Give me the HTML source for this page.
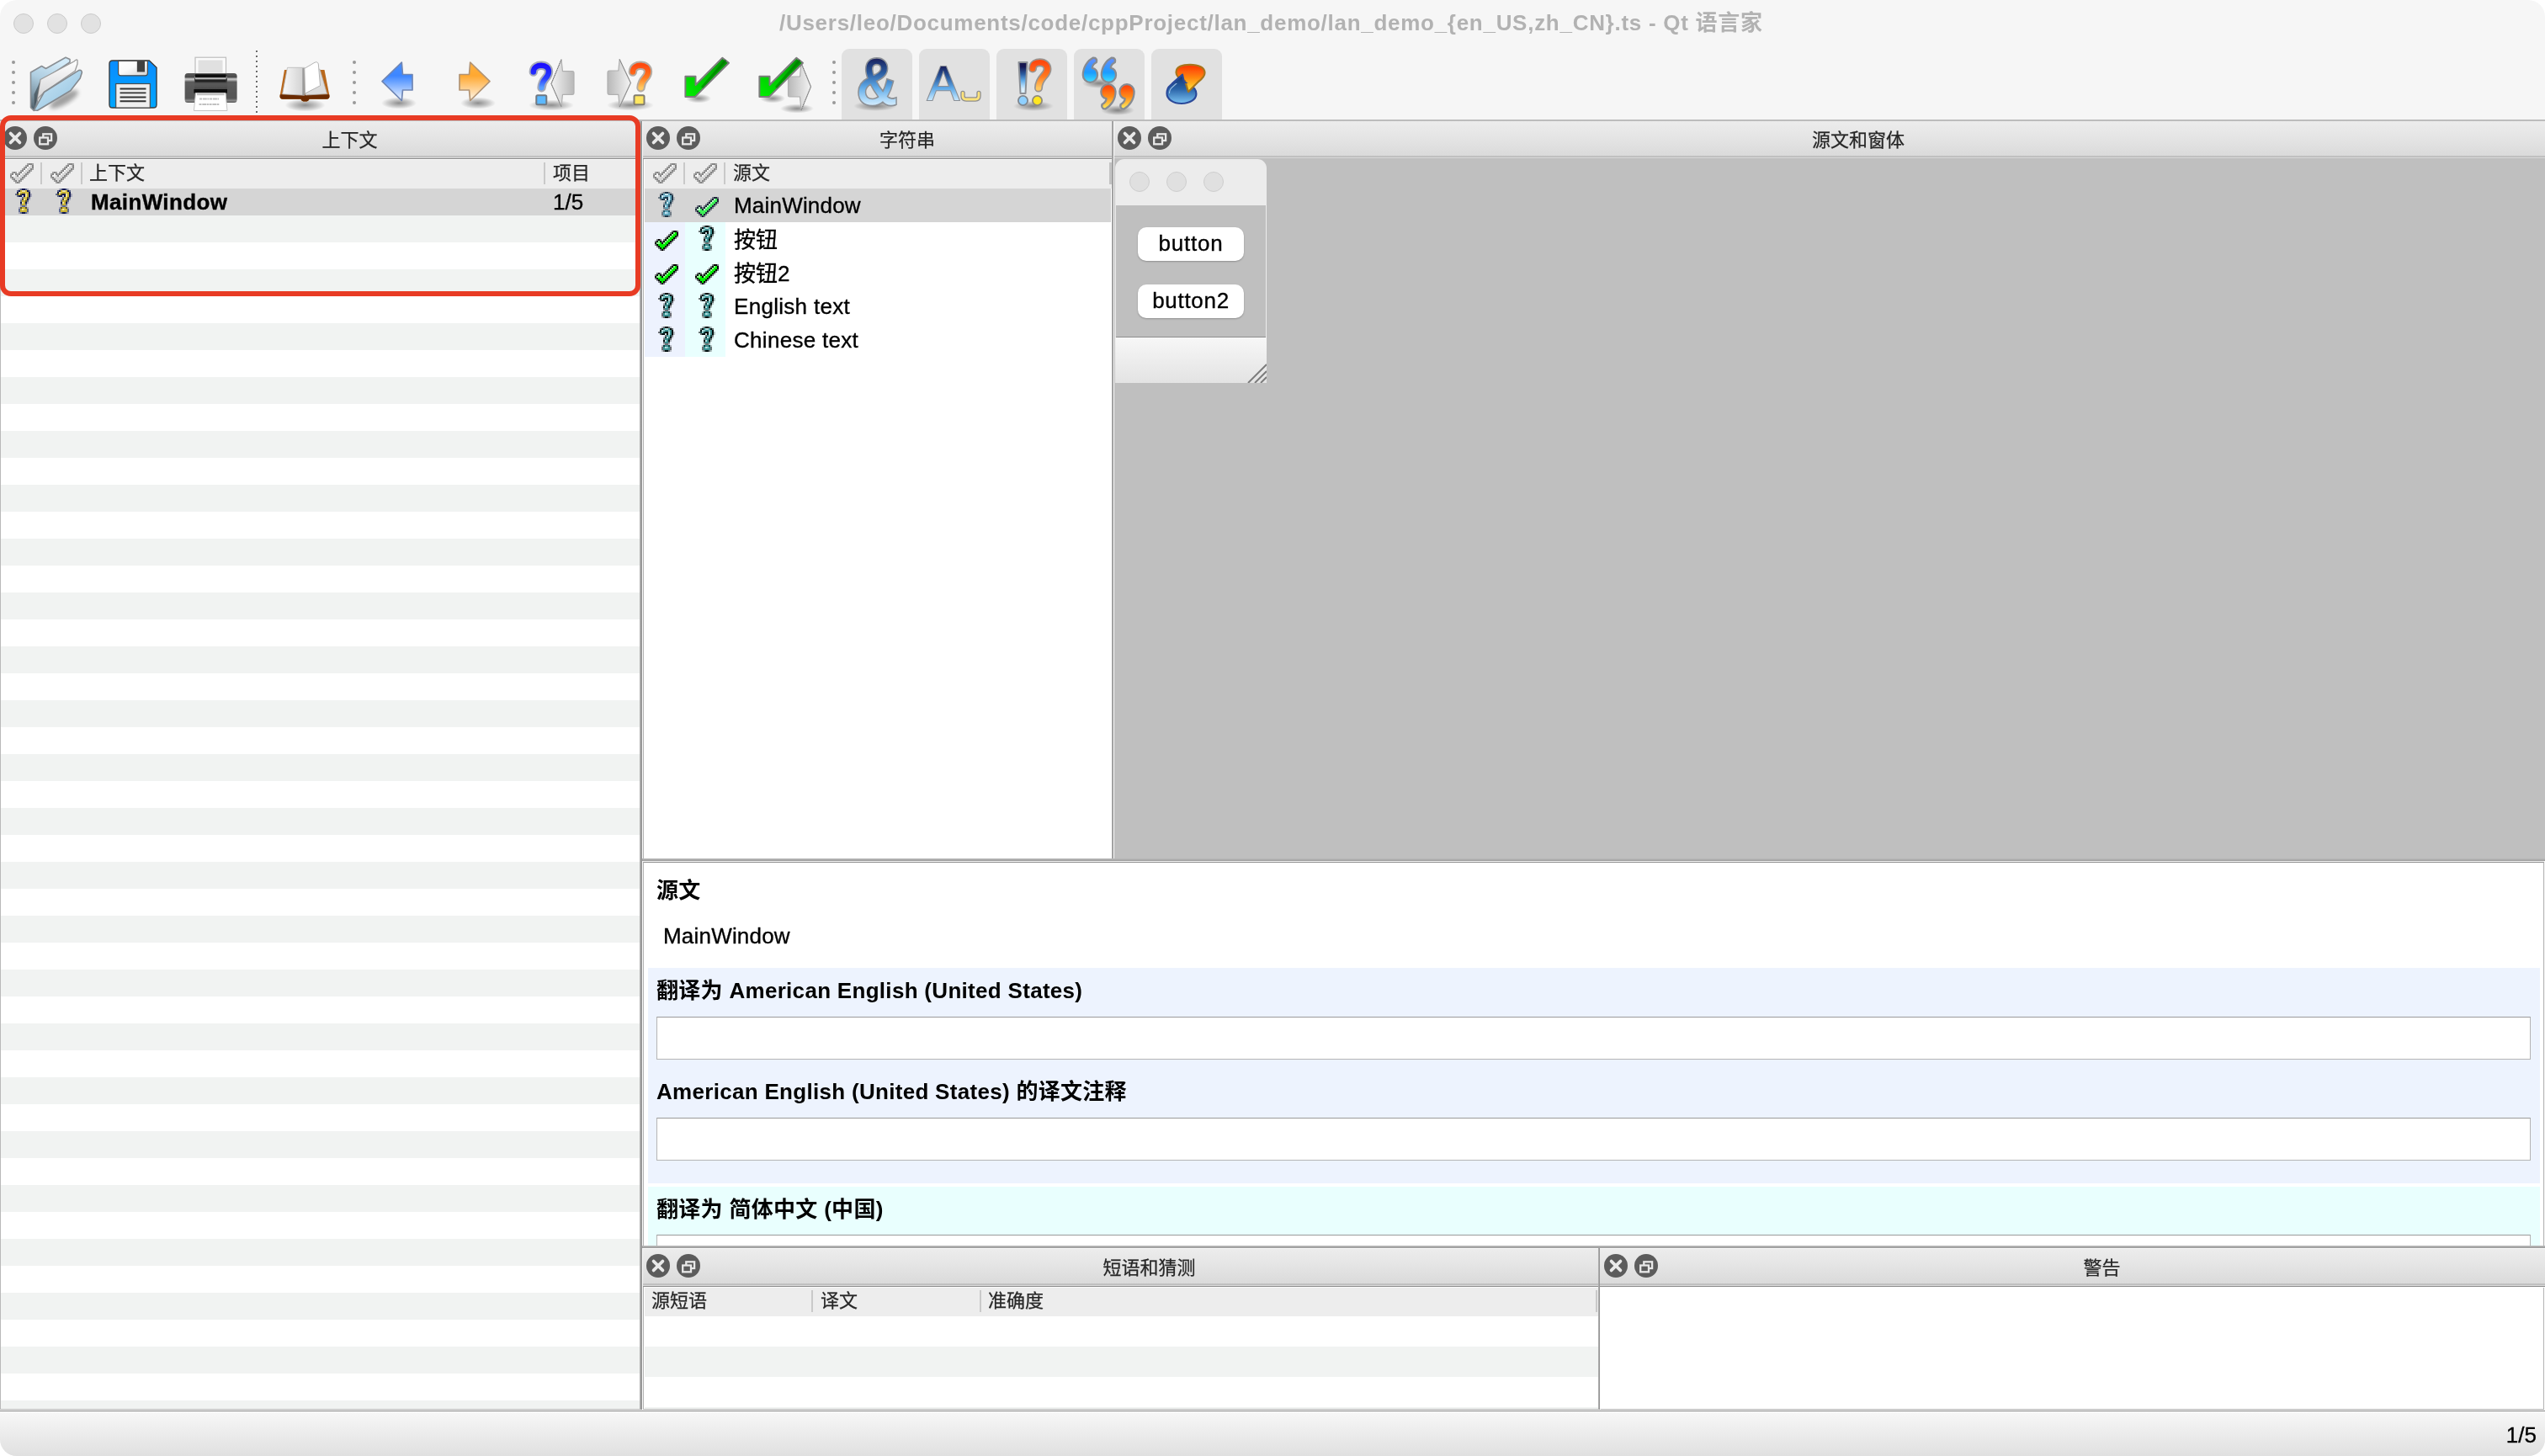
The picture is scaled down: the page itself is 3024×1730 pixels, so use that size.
<!DOCTYPE html>
<html lang="zh-CN">
<head>
<meta charset="utf-8">
<title>Qt 语言家</title>
<style>
html,body{margin:0;padding:0;}
body{width:3024px;height:1730px;overflow:hidden;background:#fff;position:relative;
  font-family:"Liberation Sans","Noto Sans CJK SC",sans-serif;color:#000;}
.abs,.win *{position:absolute;box-sizing:border-box;}
.win{position:absolute;left:0;top:0;width:3024px;height:1730px;background:#f6f6f6;border-radius:20px;overflow:hidden;will-change:transform;}
.tl{width:24px;height:24px;border-radius:50%;background:#e2e2e2;border:1.5px solid #cacaca;top:16px;}
.title{left:0;top:0;width:3024px;height:56px;}
.title span{left:926px;top:12px;font-size:26px;line-height:30px;font-weight:bold;color:#b2b2b2;white-space:nowrap;letter-spacing:0.72px;}
/* toolbar */
.hdl i{width:4px;height:4px;border-radius:50%;background:#999;left:0;}
.tsep{left:304px;top:60px;width:2px;height:74px;background:repeating-linear-gradient(#6a6a6a 0,#6a6a6a 2px,transparent 2px,transparent 6px);}
.tsep2{left:305px;top:61px;width:2px;height:74px;background:repeating-linear-gradient(#fdfdfd 0,#fdfdfd 2px,transparent 2px,transparent 6px);}
.tog{top:58px;width:84px;height:86px;background:#e1e1e1;border-radius:9px 9px 0 0;}
.tbline{left:0;top:142px;width:3024px;height:2px;background:#bcbcbc;}
/* dock title bars */
.dt{height:41px;top:144px;background:linear-gradient(#ececec,#e6e6e6 40%,#dadada);}
.dt .ttl{left:0;right:0;top:0;height:41px;line-height:46px;text-align:center;font-size:22px;color:#262626;-webkit-text-stroke:0.25px #262626;}
.dtl{height:5px;background:linear-gradient(#c0c0c0 0,#c0c0c0 2px,#dadada 2px,#dadada 3px,#8c8c8c 3px,#8c8c8c 4px,#fafafa 4px,#fafafa 5px);}
.dtl2{display:none;}
.cb{width:28px;height:28px;top:6px;}
/* header rows */
.hd{background:#ededed;height:34px;font-size:22px;color:#262626;}
.hd span{top:0;line-height:32px;white-space:nowrap;-webkit-text-stroke:0.25px #262626;}
.hd b{top:3px;width:2px;height:26px;background:#c9c9c9;}
.vsep{width:3px;background:linear-gradient(90deg,#b4b4b4,#8e8e8e);}
.hsep{height:3px;background:linear-gradient(#bdbdbd,#999);}
.row{font-size:26px;white-space:nowrap;-webkit-text-stroke:0.35px #000;}
.btn{-webkit-text-stroke:0.35px #000;}
.ed b.h{font-size:26px;font-weight:bold;white-space:nowrap;left:15px;line-height:32px;letter-spacing:0.3px;}
.inp{background:#fff;border:1.5px solid #b5b5b5;border-top-color:#9a9a9a;}
</style>
</head>
<body>
<div class="win">
  <!-- title bar -->
  <div class="tl" style="left:16px"></div><div class="tl" style="left:56px"></div><div class="tl" style="left:96px"></div>
  <div class="title"><span>/Users/leo/Documents/code/cppProject/lan_demo/lan_demo_{en_US,zh_CN}.ts - Qt 语言家</span></div>

  <!-- toolbar -->
  <div class="hdl" style="left:14px;top:72px;width:5px;height:54px"><i style="top:0"></i><i style="top:12px"></i><i style="top:24px"></i><i style="top:36px"></i><i style="top:48px"></i></div>
  <div class="tsep2"></div><div class="tsep"></div>
  <div class="hdl" style="left:419px;top:72px;width:5px;height:54px"><i style="top:0"></i><i style="top:12px"></i><i style="top:24px"></i><i style="top:36px"></i><i style="top:48px"></i></div>
  <div class="hdl" style="left:989px;top:72px;width:5px;height:54px"><i style="top:0"></i><i style="top:12px"></i><i style="top:24px"></i><i style="top:36px"></i><i style="top:48px"></i></div>
  <div class="tog" style="left:1000px"></div>
  <div class="tog" style="left:1092px"></div>
  <div class="tog" style="left:1184px"></div>
  <div class="tog" style="left:1276px"></div>
  <div class="tog" style="left:1368px"></div>
  <!--TB-START-->
  <svg width="0" height="0" style="left:0;top:0">
    <defs>
      <linearGradient id="gFlap" x1="0" y1="0" x2="1" y2="1"><stop offset="0" stop-color="#cfe9f8"/><stop offset="1" stop-color="#8fc0de"/></linearGradient>
      <linearGradient id="gBack" x1="0.4" y1="0" x2="0.1" y2="1"><stop offset="0" stop-color="#d2eaf8"/><stop offset="0.4" stop-color="#aecde0"/><stop offset="0.72" stop-color="#8199a8"/><stop offset="1" stop-color="#4e5c66"/></linearGradient>
      <linearGradient id="gPaper" x1="0" y1="0" x2="0" y2="1"><stop offset="0" stop-color="#ffffff"/><stop offset="1" stop-color="#d4d4d6"/></linearGradient>
      <linearGradient id="gSave" x1="0" y1="0" x2="0" y2="1"><stop offset="0" stop-color="#0a8cff"/><stop offset="1" stop-color="#00a6ff"/></linearGradient>
      <linearGradient id="gLbl" x1="0" y1="0" x2="1" y2="1"><stop offset="0" stop-color="#ffffff"/><stop offset="0.45" stop-color="#fafafa"/><stop offset="1" stop-color="#cfcfcf"/></linearGradient>
      <linearGradient id="gPrB" x1="0" y1="0" x2="0" y2="1"><stop offset="0" stop-color="#6a6a6a"/><stop offset="0.12" stop-color="#3c3c3c"/><stop offset="0.2" stop-color="#8d8d8d"/><stop offset="0.3" stop-color="#3a3a3a"/><stop offset="0.55" stop-color="#5a5a5a"/><stop offset="0.8" stop-color="#4a4a4a"/><stop offset="1" stop-color="#6e6e6e"/></linearGradient>
      <linearGradient id="gPrS" x1="0" y1="0" x2="0" y2="1"><stop offset="0" stop-color="#5a5a5a"/><stop offset="0.13" stop-color="#4a4a4a"/><stop offset="0.2" stop-color="#d0d0d0"/><stop offset="0.3" stop-color="#5c5c5c"/><stop offset="0.85" stop-color="#555"/><stop offset="0.93" stop-color="#8a8a8a"/><stop offset="1" stop-color="#555"/></linearGradient>
      <linearGradient id="gBook" x1="0" y1="0" x2="1" y2="0"><stop offset="0" stop-color="#fafafa"/><stop offset="1" stop-color="#cfcfcf"/></linearGradient>
      <linearGradient id="gBlueA" x1="0" y1="0" x2="0" y2="1"><stop offset="0" stop-color="#4a90ff"/><stop offset="0.35" stop-color="#3c86ff"/><stop offset="1" stop-color="#f4f8ff"/></linearGradient>
      <linearGradient id="gOrgA" x1="0" y1="0" x2="0" y2="1"><stop offset="0" stop-color="#ffb040"/><stop offset="0.35" stop-color="#ffa830"/><stop offset="1" stop-color="#fff6ea"/></linearGradient>
      <linearGradient id="gGryA" x1="0" y1="0" x2="1" y2="0"><stop offset="0" stop-color="#f4f4f4"/><stop offset="1" stop-color="#b8b8b8"/></linearGradient>
      <linearGradient id="gGryB" x1="1" y1="0" x2="0" y2="0"><stop offset="0" stop-color="#f4f4f4"/><stop offset="1" stop-color="#b8b8b8"/></linearGradient>
      <linearGradient id="gQBlue" x1="0" y1="0" x2="0" y2="1"><stop offset="0" stop-color="#1a10ff"/><stop offset="0.6" stop-color="#2a40ff"/><stop offset="1" stop-color="#5aa0ff"/></linearGradient>
      <linearGradient id="gQOrg" x1="0" y1="0" x2="0" y2="1"><stop offset="0" stop-color="#ff4a10"/><stop offset="0.55" stop-color="#ff7a20"/><stop offset="1" stop-color="#ffc860"/></linearGradient>
      <linearGradient id="gChk" x1="1" y1="0" x2="0" y2="1"><stop offset="0" stop-color="#008c00"/><stop offset="0.5" stop-color="#00c400"/><stop offset="1" stop-color="#00f000"/></linearGradient>
      <linearGradient id="gNavy" x1="0" y1="0" x2="0" y2="1"><stop offset="0.14" stop-color="#161650"/><stop offset="0.38" stop-color="#2c5ca0"/><stop offset="0.58" stop-color="#5ea8e6"/><stop offset="0.74" stop-color="#a8d6f8"/><stop offset="0.86" stop-color="#dcf0fe"/></linearGradient>
      <linearGradient id="gQ6" x1="0" y1="0" x2="0" y2="1"><stop offset="0" stop-color="#6a8cff"/><stop offset="0.6" stop-color="#1a9cff"/><stop offset="1" stop-color="#40e0ff"/></linearGradient>
      <linearGradient id="gQ9" x1="0" y1="0" x2="0" y2="1"><stop offset="0" stop-color="#ff3a08"/><stop offset="0.5" stop-color="#ff8a18"/><stop offset="1" stop-color="#fff060"/></linearGradient>
      <linearGradient id="gBubO" x1="0" y1="0" x2="0" y2="1"><stop offset="0" stop-color="#ff3000"/><stop offset="0.5" stop-color="#ff8a10"/><stop offset="1" stop-color="#ffec40"/></linearGradient>
      <linearGradient id="gBubB" x1="0" y1="0" x2="0" y2="1"><stop offset="0" stop-color="#14306c"/><stop offset="0.5" stop-color="#2a64a8"/><stop offset="1" stop-color="#7cc4f4"/></linearGradient>
      <linearGradient id="gQ9r" x1="0" y1="0" x2="0" y2="1"><stop offset="0" stop-color="#fff060"/><stop offset="0.5" stop-color="#ff8a18"/><stop offset="1" stop-color="#ff3a08"/></linearGradient>
      <radialGradient id="gShd"><stop offset="0" stop-color="#000" stop-opacity="0.42"/><stop offset="0.6" stop-color="#000" stop-opacity="0.18"/><stop offset="1" stop-color="#000" stop-opacity="0"/></radialGradient>
      <filter id="fPx" x="-10%" y="-10%" width="120%" height="120%"><feGaussianBlur stdDeviation="0.2"/></filter>
      <filter id="fB1" x="-20%" y="-20%" width="140%" height="140%"><feGaussianBlur stdDeviation="0.7"/></filter>
      <filter id="fB2" x="-30%" y="-30%" width="160%" height="160%"><feGaussianBlur stdDeviation="2.5"/></filter>
    </defs>
  </svg>
  <!-- open folder -->
  <svg style="left:26px;top:60px" width="90" height="80" viewBox="0 0 90 80">
    <ellipse cx="50" cy="58" rx="19" ry="6" transform="rotate(-30 50 58)" fill="#000" opacity="0.35" filter="url(#fB2)"/>
    <g filter="url(#fB1)">
    <path d="M10.5 26 L23.5 18.5 L28.5 21.5 L52 8.2 L57 10.5 L57 14 L22 37 L17 68 L14.3 71.5 L10.5 67.6 Z" fill="url(#gBack)" stroke="#8a8f94" stroke-width="1.6" stroke-linejoin="round"/>
    <path d="M22 34.5 L62 13 Q65 10 66 11.5 L66 16 L63.2 24.2 L27 49 L18 58 Z" fill="url(#gPaper)" stroke="#9a9a9a" stroke-width="1.3" stroke-linejoin="round"/>
    <path d="M14.5 52 L21.5 37 L17.5 60 L15 66 Z" fill="#2c343a" opacity="0.55"/>
    <path d="M14.3 71 L26.4 49.5 L67.6 23.6 Q71 22.5 71.4 26 L69.2 33 L57.7 47.8 L18.5 71.3 Z" fill="url(#gFlap)" stroke="#858a8f" stroke-width="1.6" stroke-linejoin="round"/>
    </g>
  </svg>
  <!-- save -->
  <svg style="left:129.1px;top:70.8px" width="58" height="58" viewBox="0 0 60 60">
    <path d="M5 1 H50 L59 9.5 V55 Q59 59 55 59 H5 Q1 59 1 55 V5 Q1 1 5 1 Z" fill="url(#gSave)" stroke="#3a3a3a" stroke-width="1.4"/>
    <path d="M12 1.4 H48 V16.5 Q48 19.5 45 19.5 H15 Q12 19.5 12 16.5 Z" fill="url(#gLbl)" stroke="#4a4a4a" stroke-width="1.2"/>
    <rect x="35" y="1.8" width="9.5" height="13.2" fill="#404040"/>
    <rect x="9" y="29.5" width="42" height="29.5" fill="#efefef" stroke="#4a4a4a" stroke-width="1.2"/>
    <path d="M14 35.7 H46 M14 40.7 H46 M14 46 H46 M14 51 H46" stroke="#333" stroke-width="2"/>
  </svg>
  <!-- printer -->
  <svg style="left:210px;top:60px" width="90" height="80" viewBox="0 0 90 80">
    <g filter="url(#fB1)">
    <rect x="22" y="8.2" width="36.5" height="21" fill="#fbfbfb" stroke="#bdbdbd" stroke-width="1.2"/>
    <rect x="25.5" y="11.5" width="29" height="15" fill="#e0e0e0"/>
    <rect x="9.6" y="27" width="62" height="35" rx="3.5" fill="url(#gPrS)"/>
    <rect x="21" y="27" width="39" height="24" fill="url(#gPrB)"/>
    <rect x="22" y="28.3" width="36.5" height="3.6" fill="#0c0c0c"/>
    <rect x="22" y="32.4" width="36.5" height="1.8" fill="#b9b9b9"/>
    <rect x="22" y="35" width="36.5" height="2.6" fill="#202020"/>
    <rect x="20.4" y="46" width="39.6" height="4.6" fill="#0e0e0e"/>
    <path d="M22.5 50.6 H58 L60 71.5 H20.4 Z" fill="#fff" stroke="#c4c4c4" stroke-width="1"/>
    <path d="M24 52 H56.5" stroke="#9a9a9a" stroke-width="2.5" opacity=".6"/>
    <path d="M27 57.5 H50 M26.5 64 H51" stroke="#c0c0c0" stroke-width="2.2" stroke-dasharray="3 0.8 5 0.6 2 0.7"/>
    </g>
  </svg>
  <!-- book -->
  <svg style="left:320px;top:60px" width="90" height="80" viewBox="0 0 90 80">
    <ellipse cx="42.5" cy="65" rx="24" ry="7.5" fill="url(#gShd)"/>
    <g filter="url(#fB1)">
    <path d="M18 23 H65.5 L71.5 54 Q71.8 57.7 68 57.7 H47.5 Q46.5 60.6 42.5 60.6 Q38.5 60.6 37.4 57.7 H16 Q12.2 57.7 12.6 54 Z" fill="#b9681c"/>
    <path d="M12.8 52.3 H71.2 L71.5 54 Q71.8 57.7 68 57.7 H47.5 Q46.5 60.6 42.5 60.6 Q38.5 60.6 37.4 57.7 H16 Q12.2 57.7 12.6 54 Z" fill="#6b2c02"/>
    <path d="M60 22 L68.6 51.6 L43 53 L42 30 Z" fill="#dcdcdc" stroke="#b0b0b0" stroke-width=".7"/>
    <path d="M21.5 20.3 H41.8 V53.2 L15.6 51.8 Z" fill="url(#gBook)" stroke="#b8b8b8" stroke-width="0.8"/>
    <path d="M39.3 21 H41.8 V53 H39.3 Z" fill="#777" opacity="0.6"/>
    <path d="M41.8 21.4 L54 14.2 Q57.5 12.8 58.3 16 L60.5 41.8 L42.6 51 Z" fill="#fff" stroke="#b4b4b4" stroke-width="1"/>
    </g>
  </svg>
  <!-- prev (blue arrow) -->
  <svg style="left:440px;top:60px" width="70" height="80" viewBox="0 0 70 80">
    <ellipse cx="34" cy="62.5" rx="21" ry="7" fill="url(#gShd)"/>
    <path d="M37.3 14 L14 36.7 L37.3 59.5 L38.5 47 H50 V28.5 H38.5 Z" fill="url(#gBlueA)" stroke="#6f86b4" stroke-width="1.7" stroke-linejoin="round" filter="url(#fB1)"/>
  </svg>
  <!-- next (orange arrow) -->
  <svg style="left:532px;top:60px" width="70" height="80" viewBox="0 0 70 80">
    <ellipse cx="36" cy="62.5" rx="21" ry="7" fill="url(#gShd)"/>
    <path d="M26.7 14 L50 36.7 L26.7 59.5 L25.5 47 H14 V28.5 H25.5 Z" fill="url(#gOrgA)" stroke="#b29474" stroke-width="1.7" stroke-linejoin="round" filter="url(#fB1)"/>
  </svg>
  <!-- prev unfinished  ?< -->
  <svg style="left:620px;top:60px" width="76" height="80" viewBox="0 0 76 80">
    <ellipse cx="35" cy="65" rx="27" ry="6.5" fill="url(#gShd)"/>
    <g filter="url(#fB1)">
    <path d="M47 10.8 L35 39.5 L47 66.8 L48.5 52.3 H60 Q62 52.3 62 50 V27 Q62 24.7 60 24.7 H48.5 Z" fill="url(#gGryA)" stroke="#b0b0b0" stroke-width="1.2" stroke-linejoin="round"/>
    <path d="M47 10.8 L35 39.5 L47 66.8" fill="none" stroke="#6e6e6e" stroke-width="1" stroke-dasharray="1.2 1"/>
    <path d="M13.8 25.5 C13.8 19.5 19 17.8 23 17.8 C28.5 17.8 32 20.6 32 25.2 C32 33 24 33 23.5 44.2" fill="none" stroke="#a6aab8" stroke-width="10.4" stroke-linecap="round"/>
    <path d="M13.8 25.5 C13.8 19.5 19 17.8 23 17.8 C28.5 17.8 32 20.6 32 25.2 C32 33 24 33 23.5 44.2" fill="none" stroke="url(#gQBlue)" stroke-width="6.4" stroke-linecap="round"/>
    <rect x="17.3" y="53.3" width="12" height="11" rx="1.5" fill="#5cb8ff" stroke="#6f7882" stroke-width="2"/>
    </g>
  </svg>
  <!-- next unfinished  >? -->
  <svg style="left:712px;top:60px" width="76" height="80" viewBox="0 0 76 80">
    <ellipse cx="37" cy="65" rx="28" ry="6.5" fill="url(#gShd)"/>
    <g filter="url(#fB1)">
    <path d="M24.2 10.6 L37.4 38.5 L24.2 67 L22.8 52.3 H12 Q10 52.3 10 50 V26.3 Q10 24 12 24 H22.8 Z" fill="url(#gGryB)" stroke="#b0b0b0" stroke-width="1.2" stroke-linejoin="round"/>
    <path d="M24.2 10.6 L37.4 38.5 L24.2 67" fill="none" stroke="#6e6e6e" stroke-width="1" stroke-dasharray="1.2 1"/>
    <path d="M39.9 25.5 C39.9 19.5 45 17.8 49 17.8 C54.5 17.8 58 20.6 58 25.2 C58 33 50 33 49.5 44.2" fill="none" stroke="#b4aca4" stroke-width="10.4" stroke-linecap="round"/>
    <path d="M39.9 25.5 C39.9 19.5 45 17.8 49 17.8 C54.5 17.8 58 20.6 58 25.2 C58 33 50 33 49.5 44.2" fill="none" stroke="url(#gQOrg)" stroke-width="6.4" stroke-linecap="round"/>
    <rect x="41.5" y="53.3" width="12" height="11" rx="1.5" fill="#ffe660" stroke="#827d70" stroke-width="2"/>
    </g>
  </svg>
  <!-- done (green check) -->
  <svg style="left:804px;top:60px" width="76" height="80" viewBox="0 0 76 80">
    <ellipse cx="26" cy="57" rx="15" ry="5.5" fill="url(#gShd)"/>
    <g filter="url(#fB1)"><path d="M10.4 30.7 H22.5 V41 L54.4 8.7 L62 14.7 L22 54.9 H10.4 Z" fill="url(#gChk)" stroke="#7c7c7c" stroke-width="2" stroke-linejoin="round"/><path d="M31 43 L57.5 12.5" stroke="#006a00" stroke-width="3.2" opacity=".5" stroke-linecap="round"/></g>
  </svg>
  <!-- done and next -->
  <svg style="left:892px;top:60px" width="80" height="80" viewBox="0 0 80 80">
    <ellipse cx="26" cy="57" rx="15" ry="5.5" fill="url(#gShd)"/>
    <ellipse cx="55" cy="69" rx="20" ry="5.5" fill="url(#gShd)"/>
    <g filter="url(#fB1)">
    <path d="M60 15 L71.5 43 L60 71 L58.5 55 H46 Q44.5 55 44.5 53 V33 Q44.5 31 46 31 H58.5 Z" fill="url(#gGryB)" stroke="#b0b0b0" stroke-width="1.2" stroke-linejoin="round"/>
    <path d="M60 15 L71.5 43 L60 71" fill="none" stroke="#6e6e6e" stroke-width="1" stroke-dasharray="1.2 1"/>
    <path d="M10.4 30.7 H22.5 V41 L54.4 8.7 L62 14.7 L22 54.9 H10.4 Z" fill="url(#gChk)" stroke="#7c7c7c" stroke-width="2" stroke-linejoin="round"/><path d="M31 43 L57.5 12.5" stroke="#006a00" stroke-width="3.2" opacity=".5" stroke-linecap="round"/>
    </g>
  </svg>
  <!-- accelerator & -->
  <svg style="left:1000px;top:58px" width="84" height="84" viewBox="0 0 84 84">
    <ellipse cx="40" cy="68" rx="26" ry="6" fill="url(#gShd)"/>
    <g filter="url(#fB1)" transform="translate(42.5 0) scale(0.9 1) translate(-42.5 0)"><text x="16.5" y="65" font-family="Liberation Sans, sans-serif" font-size="76" fill="#8c9096" stroke="#8c9096" stroke-width="5">&amp;</text><text x="16.5" y="65" font-family="Liberation Sans, sans-serif" font-size="76" fill="url(#gNavy)" stroke="url(#gNavy)" stroke-width="1.6">&amp;</text></g>
  </svg>
  <!-- ending punctuation A_ -->
  <svg style="left:1092px;top:58px" width="84" height="84" viewBox="0 0 84 84">
    <g filter="url(#fB1)">
    <text x="10" y="61" font-family="Liberation Sans, sans-serif" font-size="56.5" fill="url(#gNavy)" stroke="#8c9096" stroke-width="2.2" paint-order="stroke">A</text>
    <path d="M52 52.5 V56 Q52 60 56 60 H67 Q71 60 71 56 V52.5" fill="none" stroke="#8f8f8f" stroke-width="5.4" stroke-linecap="round"/>
    <path d="M52 52.5 V56 Q52 60 56 60 H67 Q71 60 71 56 V52.5" fill="none" stroke="#ffe37a" stroke-width="2.8" stroke-linecap="round"/>
    </g>
  </svg>
  <!-- phrase matches !? -->
  <svg style="left:1184px;top:58px" width="84" height="84" viewBox="0 0 84 84">
    <ellipse cx="44" cy="68" rx="24" ry="6" fill="url(#gShd)"/>
    <g filter="url(#fB1)">
    <path d="M26.5 16 H36.5 L34.5 53 H28.5 Z" fill="url(#gNavy)" stroke="#8c9096" stroke-width="2" stroke-linejoin="round"/>
    <circle cx="31.5" cy="61.5" r="5.6" fill="#8fd0ff" stroke="#7f8790" stroke-width="1.8"/>
    <path d="M43 23.5 C43 17.5 48 16.2 51.5 16.2 C57 16.2 60.5 19.5 60.5 24 C60.5 32.5 50.5 33 50 46.5" fill="none" stroke="#9a9490" stroke-width="10" stroke-linecap="round"/>
    <path d="M43 23.5 C43 17.5 48 16.2 51.5 16.2 C57 16.2 60.5 19.5 60.5 24 C60.5 32.5 50.5 33 50 46.5" fill="none" stroke="url(#gQOrg)" stroke-width="6.6" stroke-linecap="round"/>
    <circle cx="48.5" cy="61.5" r="5.6" fill="#ffe620" stroke="#8f8a7d" stroke-width="1.8"/>
    </g>
  </svg>
  <!-- place markers quotes -->
  <svg style="left:1276px;top:58px" width="84" height="84" viewBox="0 0 84 84">
    <ellipse cx="30" cy="41" rx="20" ry="6" fill="url(#gShd)"/>
    <ellipse cx="52" cy="73" rx="20" ry="6" fill="url(#gShd)"/>
    <g filter="url(#fB1)" stroke="#878b92" stroke-width="2.3" stroke-linejoin="round">
    <path id="q6" d="M25 10.8 C26.8 12 27.5 14 26.8 16 C24 17.5 21.9 20 21.7 22.8 C25.8 23.6 28 27 28 31.2 A8.6 8.6 0 0 1 10.8 31.2 C10.8 22 16 14.2 23 10.6 Z" fill="url(#gQ6)"/>
    <path d="M25 10.8 C26.8 12 27.5 14 26.8 16 C24 17.5 21.9 20 21.7 22.8 C25.8 23.6 28 27 28 31.2 A8.6 8.6 0 0 1 10.8 31.2 C10.8 22 16 14.2 23 10.6 Z" fill="url(#gQ6)" transform="translate(22 0)"/>
    <path d="M25 10.8 C26.8 12 27.5 14 26.8 16 C24 17.5 21.9 20 21.7 22.8 C25.8 23.6 28 27 28 31.2 A8.6 8.6 0 0 1 10.8 31.2 C10.8 22 16 14.2 23 10.6 Z" fill="url(#gQ9r)" transform="translate(60.3 82) scale(-1)"/>
    <path d="M25 10.8 C26.8 12 27.5 14 26.8 16 C24 17.5 21.9 20 21.7 22.8 C25.8 23.6 28 27 28 31.2 A8.6 8.6 0 0 1 10.8 31.2 C10.8 22 16 14.2 23 10.6 Z" fill="url(#gQ9r)" transform="translate(82.4 82) scale(-1)"/>
    </g>
  </svg>
  <!-- validation bubbles -->
  <svg style="left:1368px;top:58px" width="84" height="84" viewBox="0 0 84 84">
    <defs><clipPath id="cpTail"><rect x="0" y="0" width="84" height="41"/></clipPath></defs>
    <g filter="url(#fB1)">
    <path d="M18.5 53 C18.5 49 19 46.5 22 44 L37 30.6 L38.5 38 C40 41 44 42 47 44 C51 46 53.4 49 53.4 53.5 C53.4 60 46 65 36 65 C26 65 18.5 60 18.5 53 Z" fill="url(#gBubB)" stroke="#2c4a9a" stroke-width="2.2" stroke-linejoin="round"/>
    <path d="M21.5 53 C21.5 50 22 48 24.5 46 L35 36.5" fill="none" stroke="#b8d4f4" stroke-width="1.1" opacity=".8"/>
    <path d="M29.5 28 C29.5 21 37 18.8 46 18.8 C56 18.8 63.5 22 63.5 28.5 C63.5 33 60 36 56 39 L44 51 L40 38 C34 36 29.5 33 29.5 28 Z" fill="url(#gBubO)" stroke="#a8741c" stroke-width="2.2" stroke-linejoin="round"/>
    <g clip-path="url(#cpTail)"><path d="M18.5 53 C18.5 49 19 46.5 22 44 L37 30.6 L38.5 38 C40 41 44 42 47 44 C51 46 53.4 49 53.4 53.5 C53.4 60 46 65 36 65 C26 65 18.5 60 18.5 53 Z" fill="url(#gBubB)" stroke="#2c4a9a" stroke-width="2.2" stroke-linejoin="round"/></g>
    </g>
  </svg>
  <!--TB-END-->
  <div class="tbline"></div>

  <!-- LEFT DOCK : 上下文 -->
  <div id="ldock" style="left:0;top:144px;width:760px;height:1532px;background:#fff;">
    <div class="dt" style="left:0;top:0;width:760px"><div class="ttl" style="left:71px">上下文</div><svg class="cb" style="left:3.8px;top:6px" width="28" height="28" viewBox="0 0 28 28"><circle cx="14" cy="14" r="14" fill="#5c5c5c"/><path d="M8.6 8.6L19.4 19.4M19.4 8.6L8.6 19.4" stroke="#e9e9e9" stroke-width="3.8" stroke-linecap="round"/></svg><svg class="cb" style="left:39.8px;top:6px" width="28" height="28" viewBox="0 0 28 28"><circle cx="14" cy="14" r="14" fill="#5c5c5c"/><rect x="11.3" y="9.3" width="9.8" height="7.7" fill="none" stroke="#e9e9e9" stroke-width="2.3"/><rect x="7.2" y="13.5" width="9.8" height="7.8" fill="#5c5c5c" stroke="#e9e9e9" stroke-width="2.3"/></svg></div>
    <div class="dtl" style="left:0;top:41px;width:760px"></div>
        <div class="hd" style="left:1px;top:46px;width:759px">
      <b style="left:47px"></b><b style="left:95px"></b><span style="left:105px">上下文</span>
      <b style="left:645px"></b><span style="left:656px">项目</span>
    </div>
    <div id="lrows" style="left:1px;top:80px;width:759px;height:1450px;background:repeating-linear-gradient(#fff 0,#fff 32px,#f1f3f2 32px,#f1f3f2 64px);"></div>
    <div style="left:1px;top:80px;width:759px;height:32px;background:#d5d5d5"></div>
    <svg class="px" style="left:12px;top:50px" width="28" height="24" viewBox="0 0 14 12"><g filter="url(#fPx)"><path fill="#858585" fill-opacity=".7" d="M10 0h1v1h-1zM13 0h1v1h-1zM9 1h1v1h-1zM8 2h1v1h-1zM7 3h1v1h-1zM13 3h1v1h-1zM6 4h1v1h-1zM12 4h1v1h-1zM1 5h1v1h-1zM3 5h1v1h-1zM5 5h1v1h-1zM11 5h1v1h-1zM0 6h1v1h-1zM4 6h1v1h-1zM10 6h1v1h-1zM9 7h1v1h-1zM0 8h1v1h-1zM8 8h1v1h-1zM1 9h1v1h-1zM7 9h1v1h-1zM2 10h1v1h-1zM6 10h1v1h-1zM3 11h1v1h-1zM5 11h1v1h-1z"/><path fill="#858585" d="M11 0h2v1h-2zM10 1h1v1h-1zM13 1h1v1h-1zM9 2h1v1h-1zM13 2h1v1h-1zM8 3h1v1h-1zM12 3h1v1h-1zM7 4h1v1h-1zM11 4h1v1h-1zM2 5h1v1h-1zM6 5h1v1h-1zM10 5h1v1h-1zM1 6h1v1h-1zM3 6h1v1h-1zM5 6h1v1h-1zM9 6h1v1h-1zM0 7h1v1h-1zM4 7h1v1h-1zM8 7h1v1h-1zM1 8h1v1h-1zM7 8h1v1h-1zM2 9h1v1h-1zM6 9h1v1h-1zM3 10h1v1h-1zM5 10h1v1h-1zM4 11h1v1h-1z"/><path fill="#f6f6f6" d="M11 1h1v1h-1zM10 2h1v1h-1zM9 3h1v1h-1zM8 4h1v1h-1zM7 5h1v1h-1zM2 6h1v1h-1zM6 6h1v1h-1zM1 7h2v1h-2zM5 7h1v1h-1z"/><path fill="#d6d6d6" d="M12 1h1v1h-1zM11 2h2v1h-2zM10 3h2v1h-2zM9 4h2v1h-2zM8 5h2v1h-2zM7 6h2v1h-2zM3 7h1v1h-1zM6 7h2v1h-2zM2 8h5v1h-5zM3 9h3v1h-3zM4 10h1v1h-1z"/></g></svg><svg class="px" style="left:60px;top:50px" width="28" height="24" viewBox="0 0 14 12"><g filter="url(#fPx)"><path fill="#858585" fill-opacity=".7" d="M10 0h1v1h-1zM13 0h1v1h-1zM9 1h1v1h-1zM8 2h1v1h-1zM7 3h1v1h-1zM13 3h1v1h-1zM6 4h1v1h-1zM12 4h1v1h-1zM1 5h1v1h-1zM3 5h1v1h-1zM5 5h1v1h-1zM11 5h1v1h-1zM0 6h1v1h-1zM4 6h1v1h-1zM10 6h1v1h-1zM9 7h1v1h-1zM0 8h1v1h-1zM8 8h1v1h-1zM1 9h1v1h-1zM7 9h1v1h-1zM2 10h1v1h-1zM6 10h1v1h-1zM3 11h1v1h-1zM5 11h1v1h-1z"/><path fill="#858585" d="M11 0h2v1h-2zM10 1h1v1h-1zM13 1h1v1h-1zM9 2h1v1h-1zM13 2h1v1h-1zM8 3h1v1h-1zM12 3h1v1h-1zM7 4h1v1h-1zM11 4h1v1h-1zM2 5h1v1h-1zM6 5h1v1h-1zM10 5h1v1h-1zM1 6h1v1h-1zM3 6h1v1h-1zM5 6h1v1h-1zM9 6h1v1h-1zM0 7h1v1h-1zM4 7h1v1h-1zM8 7h1v1h-1zM1 8h1v1h-1zM7 8h1v1h-1zM2 9h1v1h-1zM6 9h1v1h-1zM3 10h1v1h-1zM5 10h1v1h-1zM4 11h1v1h-1z"/><path fill="#f6f6f6" d="M11 1h1v1h-1zM10 2h1v1h-1zM9 3h1v1h-1zM8 4h1v1h-1zM7 5h1v1h-1zM2 6h1v1h-1zM6 6h1v1h-1zM1 7h2v1h-2zM5 7h1v1h-1z"/><path fill="#d6d6d6" d="M12 1h1v1h-1zM11 2h2v1h-2zM10 3h2v1h-2zM9 4h2v1h-2zM8 5h2v1h-2zM7 6h2v1h-2zM3 7h1v1h-1zM6 7h2v1h-2zM2 8h5v1h-5zM3 9h3v1h-3zM4 10h1v1h-1z"/></g></svg><svg class="px" style="left:18px;top:80px" width="20" height="30" viewBox="0 0 10 15"><g filter="url(#fPx)"><path fill="#0a1250" fill-opacity=".22" d="M2 0h1v1h-1zM7 0h1v1h-1zM9 3h1v1h-1zM9 4h1v1h-1zM3 6h1v1h-1zM8 6h1v1h-1zM7 8h1v1h-1zM3 10h1v1h-1zM6 10h1v1h-1zM2 11h1v1h-1zM7 11h1v1h-1zM2 14h1v1h-1zM7 14h1v1h-1z"/><path fill="#0a1250" fill-opacity=".55" d="M3 0h1v1h-1zM6 0h1v1h-1zM1 1h1v1h-1zM8 1h1v1h-1zM0 3h1v1h-1zM1 4h1v1h-1zM4 5h1v1h-1zM8 5h1v1h-1zM3 7h1v1h-1zM7 7h1v1h-1zM3 9h1v1h-1zM6 9h1v1h-1zM4 10h2v1h-2zM2 12h1v1h-1zM7 12h1v1h-1zM2 13h1v1h-1zM7 13h1v1h-1zM3 14h1v1h-1zM6 14h1v1h-1z"/><path fill="#0a1250" d="M4 0h2v1h-2zM2 1h1v1h-1zM7 1h1v1h-1zM1 2h1v1h-1zM8 2h1v1h-1zM4 3h2v1h-2zM8 3h1v1h-1zM2 4h2v1h-2zM5 4h1v1h-1zM8 4h1v1h-1zM7 6h1v1h-1zM3 8h1v1h-1zM6 8h1v1h-1zM4 14h2v1h-2z"/><path fill="#c8b234" d="M3 1h1v1h-1zM6 1h1v1h-1zM4 2h2v1h-2zM7 2h1v1h-1zM7 3h1v1h-1zM7 4h1v1h-1zM5 5h1v1h-1zM6 6h1v1h-1zM4 7h2v1h-2zM5 8h1v1h-1zM4 9h2v1h-2zM4 11h2v1h-2zM3 12h1v1h-1zM6 12h1v1h-1zM3 13h4v1h-4z"/><path fill="#efe49a" d="M4 1h2v1h-2zM2 2h1v1h-1zM6 3h1v1h-1zM6 4h1v1h-1zM5 6h1v1h-1zM4 8h1v1h-1zM4 12h1v1h-1z"/><path fill="#dcc850" d="M3 2h1v1h-1zM6 2h1v1h-1zM2 3h1v1h-1zM6 5h1v1h-1zM5 12h1v1h-1z"/><path fill="#5c5420" d="M1 3h1v1h-1zM3 3h1v1h-1zM7 5h1v1h-1zM4 6h1v1h-1zM6 7h1v1h-1zM3 11h1v1h-1zM6 11h1v1h-1z"/><path fill="#c4c4d6" d="M4 4h1v1h-1z"/></g></svg><svg class="px" style="left:66px;top:80px" width="20" height="30" viewBox="0 0 10 15"><g filter="url(#fPx)"><path fill="#0a1250" fill-opacity=".22" d="M2 0h1v1h-1zM7 0h1v1h-1zM9 3h1v1h-1zM9 4h1v1h-1zM3 6h1v1h-1zM8 6h1v1h-1zM7 8h1v1h-1zM3 10h1v1h-1zM6 10h1v1h-1zM2 11h1v1h-1zM7 11h1v1h-1zM2 14h1v1h-1zM7 14h1v1h-1z"/><path fill="#0a1250" fill-opacity=".55" d="M3 0h1v1h-1zM6 0h1v1h-1zM1 1h1v1h-1zM8 1h1v1h-1zM0 3h1v1h-1zM1 4h1v1h-1zM4 5h1v1h-1zM8 5h1v1h-1zM3 7h1v1h-1zM7 7h1v1h-1zM3 9h1v1h-1zM6 9h1v1h-1zM4 10h2v1h-2zM2 12h1v1h-1zM7 12h1v1h-1zM2 13h1v1h-1zM7 13h1v1h-1zM3 14h1v1h-1zM6 14h1v1h-1z"/><path fill="#0a1250" d="M4 0h2v1h-2zM2 1h1v1h-1zM7 1h1v1h-1zM1 2h1v1h-1zM8 2h1v1h-1zM4 3h2v1h-2zM8 3h1v1h-1zM2 4h2v1h-2zM5 4h1v1h-1zM8 4h1v1h-1zM7 6h1v1h-1zM3 8h1v1h-1zM6 8h1v1h-1zM4 14h2v1h-2z"/><path fill="#c8b234" d="M3 1h1v1h-1zM6 1h1v1h-1zM4 2h2v1h-2zM7 2h1v1h-1zM7 3h1v1h-1zM7 4h1v1h-1zM5 5h1v1h-1zM6 6h1v1h-1zM4 7h2v1h-2zM5 8h1v1h-1zM4 9h2v1h-2zM4 11h2v1h-2zM3 12h1v1h-1zM6 12h1v1h-1zM3 13h4v1h-4z"/><path fill="#efe49a" d="M4 1h2v1h-2zM2 2h1v1h-1zM6 3h1v1h-1zM6 4h1v1h-1zM5 6h1v1h-1zM4 8h1v1h-1zM4 12h1v1h-1z"/><path fill="#dcc850" d="M3 2h1v1h-1zM6 2h1v1h-1zM2 3h1v1h-1zM6 5h1v1h-1zM5 12h1v1h-1z"/><path fill="#5c5420" d="M1 3h1v1h-1zM3 3h1v1h-1zM7 5h1v1h-1zM4 6h1v1h-1zM6 7h1v1h-1zM3 11h1v1h-1zM6 11h1v1h-1z"/><path fill="#c4c4d6" d="M4 4h1v1h-1z"/></g></svg><div class="row" style="left:108px;top:80px;line-height:32px;font-weight:bold;letter-spacing:0.36px">MainWindow</div>
    <div class="row" style="left:657px;top:80px;line-height:33px;">1/5</div>
    <div style="left:0;top:46px;width:1px;height:1486px;background:#b9b9b9"></div>
    <div style="left:0;top:1530px;width:760px;height:1px;background:#b9b9b9"></div>
  </div>
  <div class="vsep" style="left:760px;top:144px;height:1532px"></div><div style="left:763px;top:144px;width:1px;height:1531px;background:#fbfbfb"></div>

  <!-- MIDDLE DOCK : 字符串 -->
  <div id="mdock" style="left:764px;top:144px;width:558px;height:876px;background:#fff;">
    <div class="dt" style="left:0;top:0;width:558px"><div class="ttl" style="left:70px">字符串</div><svg class="cb" style="left:4px;top:6px" width="28" height="28" viewBox="0 0 28 28"><circle cx="14" cy="14" r="14" fill="#5c5c5c"/><path d="M8.6 8.6L19.4 19.4M19.4 8.6L8.6 19.4" stroke="#e9e9e9" stroke-width="3.8" stroke-linecap="round"/></svg><svg class="cb" style="left:40px;top:6px" width="28" height="28" viewBox="0 0 28 28"><circle cx="14" cy="14" r="14" fill="#5c5c5c"/><rect x="11.3" y="9.3" width="9.8" height="7.7" fill="none" stroke="#e9e9e9" stroke-width="2.3"/><rect x="7.2" y="13.5" width="9.8" height="7.8" fill="#5c5c5c" stroke="#e9e9e9" stroke-width="2.3"/></svg></div>
    <div class="dtl" style="left:0;top:41px;width:558px"></div>
    <div style="left:0;top:45px;width:1px;height:831px;background:#b4b4b4"></div>
    <div style="right:0;top:45px;width:1px;height:831px;background:#b4b4b4"></div>
    <div class="hd" style="left:2px;top:46px;width:555px">
      <b style="left:46px"></b><b style="left:94px"></b><span style="left:105px">源文</span><b style="left:552px;width:3px;background:#c2c2c2"></b>
    </div>
    <div style="left:2px;top:120px;width:48px;height:160px;background:#edf2fe"></div>
    <div style="left:50px;top:120px;width:48px;height:160px;background:#e9fffe"></div>
    <div style="left:2px;top:80px;width:554px;height:40px;background:#d5d5d5"></div>
    <svg class="px" style="left:12px;top:50px" width="28" height="24" viewBox="0 0 14 12"><g filter="url(#fPx)"><path fill="#858585" fill-opacity=".7" d="M10 0h1v1h-1zM13 0h1v1h-1zM9 1h1v1h-1zM8 2h1v1h-1zM7 3h1v1h-1zM13 3h1v1h-1zM6 4h1v1h-1zM12 4h1v1h-1zM1 5h1v1h-1zM3 5h1v1h-1zM5 5h1v1h-1zM11 5h1v1h-1zM0 6h1v1h-1zM4 6h1v1h-1zM10 6h1v1h-1zM9 7h1v1h-1zM0 8h1v1h-1zM8 8h1v1h-1zM1 9h1v1h-1zM7 9h1v1h-1zM2 10h1v1h-1zM6 10h1v1h-1zM3 11h1v1h-1zM5 11h1v1h-1z"/><path fill="#858585" d="M11 0h2v1h-2zM10 1h1v1h-1zM13 1h1v1h-1zM9 2h1v1h-1zM13 2h1v1h-1zM8 3h1v1h-1zM12 3h1v1h-1zM7 4h1v1h-1zM11 4h1v1h-1zM2 5h1v1h-1zM6 5h1v1h-1zM10 5h1v1h-1zM1 6h1v1h-1zM3 6h1v1h-1zM5 6h1v1h-1zM9 6h1v1h-1zM0 7h1v1h-1zM4 7h1v1h-1zM8 7h1v1h-1zM1 8h1v1h-1zM7 8h1v1h-1zM2 9h1v1h-1zM6 9h1v1h-1zM3 10h1v1h-1zM5 10h1v1h-1zM4 11h1v1h-1z"/><path fill="#f6f6f6" d="M11 1h1v1h-1zM10 2h1v1h-1zM9 3h1v1h-1zM8 4h1v1h-1zM7 5h1v1h-1zM2 6h1v1h-1zM6 6h1v1h-1zM1 7h2v1h-2zM5 7h1v1h-1z"/><path fill="#d6d6d6" d="M12 1h1v1h-1zM11 2h2v1h-2zM10 3h2v1h-2zM9 4h2v1h-2zM8 5h2v1h-2zM7 6h2v1h-2zM3 7h1v1h-1zM6 7h2v1h-2zM2 8h5v1h-5zM3 9h3v1h-3zM4 10h1v1h-1z"/></g></svg><svg class="px" style="left:60px;top:50px" width="28" height="24" viewBox="0 0 14 12"><g filter="url(#fPx)"><path fill="#858585" fill-opacity=".7" d="M10 0h1v1h-1zM13 0h1v1h-1zM9 1h1v1h-1zM8 2h1v1h-1zM7 3h1v1h-1zM13 3h1v1h-1zM6 4h1v1h-1zM12 4h1v1h-1zM1 5h1v1h-1zM3 5h1v1h-1zM5 5h1v1h-1zM11 5h1v1h-1zM0 6h1v1h-1zM4 6h1v1h-1zM10 6h1v1h-1zM9 7h1v1h-1zM0 8h1v1h-1zM8 8h1v1h-1zM1 9h1v1h-1zM7 9h1v1h-1zM2 10h1v1h-1zM6 10h1v1h-1zM3 11h1v1h-1zM5 11h1v1h-1z"/><path fill="#858585" d="M11 0h2v1h-2zM10 1h1v1h-1zM13 1h1v1h-1zM9 2h1v1h-1zM13 2h1v1h-1zM8 3h1v1h-1zM12 3h1v1h-1zM7 4h1v1h-1zM11 4h1v1h-1zM2 5h1v1h-1zM6 5h1v1h-1zM10 5h1v1h-1zM1 6h1v1h-1zM3 6h1v1h-1zM5 6h1v1h-1zM9 6h1v1h-1zM0 7h1v1h-1zM4 7h1v1h-1zM8 7h1v1h-1zM1 8h1v1h-1zM7 8h1v1h-1zM2 9h1v1h-1zM6 9h1v1h-1zM3 10h1v1h-1zM5 10h1v1h-1zM4 11h1v1h-1z"/><path fill="#f6f6f6" d="M11 1h1v1h-1zM10 2h1v1h-1zM9 3h1v1h-1zM8 4h1v1h-1zM7 5h1v1h-1zM2 6h1v1h-1zM6 6h1v1h-1zM1 7h2v1h-2zM5 7h1v1h-1z"/><path fill="#d6d6d6" d="M12 1h1v1h-1zM11 2h2v1h-2zM10 3h2v1h-2zM9 4h2v1h-2zM8 5h2v1h-2zM7 6h2v1h-2zM3 7h1v1h-1zM6 7h2v1h-2zM2 8h5v1h-5zM3 9h3v1h-3zM4 10h1v1h-1z"/></g></svg><svg class="px" style="left:18px;top:84px" width="20" height="30" viewBox="0 0 10 15"><g filter="url(#fPx)"><path fill="#1e3648" fill-opacity=".22" d="M2 0h1v1h-1zM7 0h1v1h-1zM9 3h1v1h-1zM9 4h1v1h-1zM3 6h1v1h-1zM8 6h1v1h-1zM7 8h1v1h-1zM3 10h1v1h-1zM6 10h1v1h-1zM2 11h1v1h-1zM7 11h1v1h-1zM2 14h1v1h-1zM7 14h1v1h-1z"/><path fill="#1e3648" fill-opacity=".55" d="M3 0h1v1h-1zM6 0h1v1h-1zM1 1h1v1h-1zM8 1h1v1h-1zM0 3h1v1h-1zM1 4h1v1h-1zM4 5h1v1h-1zM8 5h1v1h-1zM3 7h1v1h-1zM7 7h1v1h-1zM3 9h1v1h-1zM6 9h1v1h-1zM4 10h2v1h-2zM2 12h1v1h-1zM7 12h1v1h-1zM2 13h1v1h-1zM7 13h1v1h-1zM3 14h1v1h-1zM6 14h1v1h-1z"/><path fill="#1e3648" d="M4 0h2v1h-2zM2 1h1v1h-1zM7 1h1v1h-1zM1 2h1v1h-1zM8 2h1v1h-1zM4 3h2v1h-2zM8 3h1v1h-1zM2 4h2v1h-2zM5 4h1v1h-1zM8 4h1v1h-1zM7 6h1v1h-1zM3 8h1v1h-1zM6 8h1v1h-1zM4 14h2v1h-2z"/><path fill="#5ea4ba" d="M3 1h1v1h-1zM6 1h1v1h-1zM4 2h2v1h-2zM7 2h1v1h-1zM7 3h1v1h-1zM7 4h1v1h-1zM5 5h1v1h-1zM6 6h1v1h-1zM4 7h2v1h-2zM5 8h1v1h-1zM4 9h2v1h-2zM4 11h2v1h-2zM3 12h1v1h-1zM6 12h1v1h-1zM3 13h4v1h-4z"/><path fill="#c8e8f4" d="M4 1h2v1h-2zM2 2h1v1h-1zM6 3h1v1h-1zM6 4h1v1h-1zM5 6h1v1h-1zM4 8h1v1h-1zM4 12h1v1h-1z"/><path fill="#9ccce0" d="M3 2h1v1h-1zM6 2h1v1h-1zM2 3h1v1h-1zM6 5h1v1h-1zM5 12h1v1h-1z"/><path fill="#2c5c6e" d="M1 3h1v1h-1zM3 3h1v1h-1zM7 5h1v1h-1zM4 6h1v1h-1zM6 7h1v1h-1zM3 11h1v1h-1zM6 11h1v1h-1z"/><path fill="#e2eef2" d="M4 4h1v1h-1z"/></g></svg><svg class="px" style="left:62px;top:90px" width="28" height="24" viewBox="0 0 14 12"><g filter="url(#fPx)"><path fill="#1a2238" fill-opacity=".5" d="M10 0h1v1h-1zM13 0h1v1h-1zM9 1h1v1h-1zM8 2h1v1h-1zM7 3h1v1h-1zM13 3h1v1h-1zM6 4h1v1h-1zM12 4h1v1h-1zM1 5h1v1h-1zM3 5h1v1h-1zM5 5h1v1h-1zM11 5h1v1h-1zM0 6h1v1h-1zM4 6h1v1h-1zM10 6h1v1h-1zM9 7h1v1h-1zM0 8h1v1h-1zM8 8h1v1h-1zM1 9h1v1h-1zM7 9h1v1h-1zM2 10h1v1h-1zM6 10h1v1h-1zM3 11h1v1h-1zM5 11h1v1h-1z"/><path fill="#1a2238" d="M11 0h2v1h-2zM10 1h1v1h-1zM13 1h1v1h-1zM9 2h1v1h-1zM13 2h1v1h-1zM8 3h1v1h-1zM12 3h1v1h-1zM7 4h1v1h-1zM11 4h1v1h-1zM2 5h1v1h-1zM6 5h1v1h-1zM10 5h1v1h-1zM1 6h1v1h-1zM3 6h1v1h-1zM5 6h1v1h-1zM9 6h1v1h-1zM0 7h1v1h-1zM4 7h1v1h-1zM8 7h1v1h-1zM1 8h1v1h-1zM7 8h1v1h-1zM2 9h1v1h-1zM6 9h1v1h-1zM3 10h1v1h-1zM5 10h1v1h-1zM4 11h1v1h-1z"/><path fill="#b4ffc0" d="M11 1h1v1h-1zM10 2h1v1h-1zM9 3h1v1h-1zM8 4h1v1h-1zM7 5h1v1h-1zM2 6h1v1h-1zM6 6h1v1h-1zM1 7h2v1h-2zM5 7h1v1h-1z"/><path fill="#3cf058" d="M12 1h1v1h-1zM11 2h2v1h-2zM10 3h2v1h-2zM9 4h2v1h-2zM8 5h2v1h-2zM7 6h2v1h-2zM3 7h1v1h-1zM6 7h2v1h-2zM2 8h5v1h-5zM3 9h3v1h-3zM4 10h1v1h-1z"/></g></svg><svg class="px" style="left:14px;top:130px" width="28" height="24" viewBox="0 0 14 12"><g filter="url(#fPx)"><path fill="#000000" fill-opacity=".5" d="M10 0h1v1h-1zM13 0h1v1h-1zM9 1h1v1h-1zM8 2h1v1h-1zM7 3h1v1h-1zM13 3h1v1h-1zM6 4h1v1h-1zM12 4h1v1h-1zM1 5h1v1h-1zM3 5h1v1h-1zM5 5h1v1h-1zM11 5h1v1h-1zM0 6h1v1h-1zM4 6h1v1h-1zM10 6h1v1h-1zM9 7h1v1h-1zM0 8h1v1h-1zM8 8h1v1h-1zM1 9h1v1h-1zM7 9h1v1h-1zM2 10h1v1h-1zM6 10h1v1h-1zM3 11h1v1h-1zM5 11h1v1h-1z"/><path fill="#000000" d="M11 0h2v1h-2zM10 1h1v1h-1zM13 1h1v1h-1zM9 2h1v1h-1zM13 2h1v1h-1zM8 3h1v1h-1zM12 3h1v1h-1zM7 4h1v1h-1zM11 4h1v1h-1zM2 5h1v1h-1zM6 5h1v1h-1zM10 5h1v1h-1zM1 6h1v1h-1zM3 6h1v1h-1zM5 6h1v1h-1zM9 6h1v1h-1zM0 7h1v1h-1zM4 7h1v1h-1zM8 7h1v1h-1zM1 8h1v1h-1zM7 8h1v1h-1zM2 9h1v1h-1zM6 9h1v1h-1zM3 10h1v1h-1zM5 10h1v1h-1zM4 11h1v1h-1z"/><path fill="#8cff8c" d="M11 1h1v1h-1zM10 2h1v1h-1zM9 3h1v1h-1zM8 4h1v1h-1zM7 5h1v1h-1zM2 6h1v1h-1zM6 6h1v1h-1zM1 7h2v1h-2zM5 7h1v1h-1z"/><path fill="#00ee00" d="M12 1h1v1h-1zM11 2h2v1h-2zM10 3h2v1h-2zM9 4h2v1h-2zM8 5h2v1h-2zM7 6h2v1h-2zM3 7h1v1h-1zM6 7h2v1h-2zM2 8h5v1h-5zM3 9h3v1h-3zM4 10h1v1h-1z"/></g></svg><svg class="px" style="left:66px;top:124px" width="20" height="30" viewBox="0 0 10 15"><g filter="url(#fPx)"><path fill="#040909" fill-opacity=".22" d="M2 0h1v1h-1zM7 0h1v1h-1zM9 3h1v1h-1zM9 4h1v1h-1zM3 6h1v1h-1zM8 6h1v1h-1zM7 8h1v1h-1zM3 10h1v1h-1zM6 10h1v1h-1zM2 11h1v1h-1zM7 11h1v1h-1zM2 14h1v1h-1zM7 14h1v1h-1z"/><path fill="#040909" fill-opacity=".55" d="M3 0h1v1h-1zM6 0h1v1h-1zM1 1h1v1h-1zM8 1h1v1h-1zM0 3h1v1h-1zM1 4h1v1h-1zM4 5h1v1h-1zM8 5h1v1h-1zM3 7h1v1h-1zM7 7h1v1h-1zM3 9h1v1h-1zM6 9h1v1h-1zM4 10h2v1h-2zM2 12h1v1h-1zM7 12h1v1h-1zM2 13h1v1h-1zM7 13h1v1h-1zM3 14h1v1h-1zM6 14h1v1h-1z"/><path fill="#040909" d="M4 0h2v1h-2zM2 1h1v1h-1zM7 1h1v1h-1zM1 2h1v1h-1zM8 2h1v1h-1zM4 3h2v1h-2zM8 3h1v1h-1zM2 4h2v1h-2zM5 4h1v1h-1zM8 4h1v1h-1zM7 6h1v1h-1zM3 8h1v1h-1zM6 8h1v1h-1zM4 14h2v1h-2z"/><path fill="#3a8f90" d="M3 1h1v1h-1zM6 1h1v1h-1zM4 2h2v1h-2zM7 2h1v1h-1zM7 3h1v1h-1zM7 4h1v1h-1zM5 5h1v1h-1zM6 6h1v1h-1zM4 7h2v1h-2zM5 8h1v1h-1zM4 9h2v1h-2zM4 11h2v1h-2zM3 12h1v1h-1zM6 12h1v1h-1zM3 13h4v1h-4z"/><path fill="#b8e0e0" d="M4 1h2v1h-2zM2 2h1v1h-1zM6 3h1v1h-1zM6 4h1v1h-1zM5 6h1v1h-1zM4 8h1v1h-1zM4 12h1v1h-1z"/><path fill="#86c6c6" d="M3 2h1v1h-1zM6 2h1v1h-1zM2 3h1v1h-1zM6 5h1v1h-1zM5 12h1v1h-1z"/><path fill="#0b3f40" d="M1 3h1v1h-1zM3 3h1v1h-1zM7 5h1v1h-1zM4 6h1v1h-1zM6 7h1v1h-1zM3 11h1v1h-1zM6 11h1v1h-1z"/><path fill="#cfdcdc" d="M4 4h1v1h-1z"/></g></svg><svg class="px" style="left:14px;top:170px" width="28" height="24" viewBox="0 0 14 12"><g filter="url(#fPx)"><path fill="#000000" fill-opacity=".5" d="M10 0h1v1h-1zM13 0h1v1h-1zM9 1h1v1h-1zM8 2h1v1h-1zM7 3h1v1h-1zM13 3h1v1h-1zM6 4h1v1h-1zM12 4h1v1h-1zM1 5h1v1h-1zM3 5h1v1h-1zM5 5h1v1h-1zM11 5h1v1h-1zM0 6h1v1h-1zM4 6h1v1h-1zM10 6h1v1h-1zM9 7h1v1h-1zM0 8h1v1h-1zM8 8h1v1h-1zM1 9h1v1h-1zM7 9h1v1h-1zM2 10h1v1h-1zM6 10h1v1h-1zM3 11h1v1h-1zM5 11h1v1h-1z"/><path fill="#000000" d="M11 0h2v1h-2zM10 1h1v1h-1zM13 1h1v1h-1zM9 2h1v1h-1zM13 2h1v1h-1zM8 3h1v1h-1zM12 3h1v1h-1zM7 4h1v1h-1zM11 4h1v1h-1zM2 5h1v1h-1zM6 5h1v1h-1zM10 5h1v1h-1zM1 6h1v1h-1zM3 6h1v1h-1zM5 6h1v1h-1zM9 6h1v1h-1zM0 7h1v1h-1zM4 7h1v1h-1zM8 7h1v1h-1zM1 8h1v1h-1zM7 8h1v1h-1zM2 9h1v1h-1zM6 9h1v1h-1zM3 10h1v1h-1zM5 10h1v1h-1zM4 11h1v1h-1z"/><path fill="#8cff8c" d="M11 1h1v1h-1zM10 2h1v1h-1zM9 3h1v1h-1zM8 4h1v1h-1zM7 5h1v1h-1zM2 6h1v1h-1zM6 6h1v1h-1zM1 7h2v1h-2zM5 7h1v1h-1z"/><path fill="#00ee00" d="M12 1h1v1h-1zM11 2h2v1h-2zM10 3h2v1h-2zM9 4h2v1h-2zM8 5h2v1h-2zM7 6h2v1h-2zM3 7h1v1h-1zM6 7h2v1h-2zM2 8h5v1h-5zM3 9h3v1h-3zM4 10h1v1h-1z"/></g></svg><svg class="px" style="left:62px;top:170px" width="28" height="24" viewBox="0 0 14 12"><g filter="url(#fPx)"><path fill="#000000" fill-opacity=".5" d="M10 0h1v1h-1zM13 0h1v1h-1zM9 1h1v1h-1zM8 2h1v1h-1zM7 3h1v1h-1zM13 3h1v1h-1zM6 4h1v1h-1zM12 4h1v1h-1zM1 5h1v1h-1zM3 5h1v1h-1zM5 5h1v1h-1zM11 5h1v1h-1zM0 6h1v1h-1zM4 6h1v1h-1zM10 6h1v1h-1zM9 7h1v1h-1zM0 8h1v1h-1zM8 8h1v1h-1zM1 9h1v1h-1zM7 9h1v1h-1zM2 10h1v1h-1zM6 10h1v1h-1zM3 11h1v1h-1zM5 11h1v1h-1z"/><path fill="#000000" d="M11 0h2v1h-2zM10 1h1v1h-1zM13 1h1v1h-1zM9 2h1v1h-1zM13 2h1v1h-1zM8 3h1v1h-1zM12 3h1v1h-1zM7 4h1v1h-1zM11 4h1v1h-1zM2 5h1v1h-1zM6 5h1v1h-1zM10 5h1v1h-1zM1 6h1v1h-1zM3 6h1v1h-1zM5 6h1v1h-1zM9 6h1v1h-1zM0 7h1v1h-1zM4 7h1v1h-1zM8 7h1v1h-1zM1 8h1v1h-1zM7 8h1v1h-1zM2 9h1v1h-1zM6 9h1v1h-1zM3 10h1v1h-1zM5 10h1v1h-1zM4 11h1v1h-1z"/><path fill="#8cff8c" d="M11 1h1v1h-1zM10 2h1v1h-1zM9 3h1v1h-1zM8 4h1v1h-1zM7 5h1v1h-1zM2 6h1v1h-1zM6 6h1v1h-1zM1 7h2v1h-2zM5 7h1v1h-1z"/><path fill="#00ee00" d="M12 1h1v1h-1zM11 2h2v1h-2zM10 3h2v1h-2zM9 4h2v1h-2zM8 5h2v1h-2zM7 6h2v1h-2zM3 7h1v1h-1zM6 7h2v1h-2zM2 8h5v1h-5zM3 9h3v1h-3zM4 10h1v1h-1z"/></g></svg><svg class="px" style="left:18px;top:204px" width="20" height="30" viewBox="0 0 10 15"><g filter="url(#fPx)"><path fill="#040909" fill-opacity=".22" d="M2 0h1v1h-1zM7 0h1v1h-1zM9 3h1v1h-1zM9 4h1v1h-1zM3 6h1v1h-1zM8 6h1v1h-1zM7 8h1v1h-1zM3 10h1v1h-1zM6 10h1v1h-1zM2 11h1v1h-1zM7 11h1v1h-1zM2 14h1v1h-1zM7 14h1v1h-1z"/><path fill="#040909" fill-opacity=".55" d="M3 0h1v1h-1zM6 0h1v1h-1zM1 1h1v1h-1zM8 1h1v1h-1zM0 3h1v1h-1zM1 4h1v1h-1zM4 5h1v1h-1zM8 5h1v1h-1zM3 7h1v1h-1zM7 7h1v1h-1zM3 9h1v1h-1zM6 9h1v1h-1zM4 10h2v1h-2zM2 12h1v1h-1zM7 12h1v1h-1zM2 13h1v1h-1zM7 13h1v1h-1zM3 14h1v1h-1zM6 14h1v1h-1z"/><path fill="#040909" d="M4 0h2v1h-2zM2 1h1v1h-1zM7 1h1v1h-1zM1 2h1v1h-1zM8 2h1v1h-1zM4 3h2v1h-2zM8 3h1v1h-1zM2 4h2v1h-2zM5 4h1v1h-1zM8 4h1v1h-1zM7 6h1v1h-1zM3 8h1v1h-1zM6 8h1v1h-1zM4 14h2v1h-2z"/><path fill="#3a8f90" d="M3 1h1v1h-1zM6 1h1v1h-1zM4 2h2v1h-2zM7 2h1v1h-1zM7 3h1v1h-1zM7 4h1v1h-1zM5 5h1v1h-1zM6 6h1v1h-1zM4 7h2v1h-2zM5 8h1v1h-1zM4 9h2v1h-2zM4 11h2v1h-2zM3 12h1v1h-1zM6 12h1v1h-1zM3 13h4v1h-4z"/><path fill="#b8e0e0" d="M4 1h2v1h-2zM2 2h1v1h-1zM6 3h1v1h-1zM6 4h1v1h-1zM5 6h1v1h-1zM4 8h1v1h-1zM4 12h1v1h-1z"/><path fill="#86c6c6" d="M3 2h1v1h-1zM6 2h1v1h-1zM2 3h1v1h-1zM6 5h1v1h-1zM5 12h1v1h-1z"/><path fill="#0b3f40" d="M1 3h1v1h-1zM3 3h1v1h-1zM7 5h1v1h-1zM4 6h1v1h-1zM6 7h1v1h-1zM3 11h1v1h-1zM6 11h1v1h-1z"/><path fill="#cfdcdc" d="M4 4h1v1h-1z"/></g></svg><svg class="px" style="left:66px;top:204px" width="20" height="30" viewBox="0 0 10 15"><g filter="url(#fPx)"><path fill="#040909" fill-opacity=".22" d="M2 0h1v1h-1zM7 0h1v1h-1zM9 3h1v1h-1zM9 4h1v1h-1zM3 6h1v1h-1zM8 6h1v1h-1zM7 8h1v1h-1zM3 10h1v1h-1zM6 10h1v1h-1zM2 11h1v1h-1zM7 11h1v1h-1zM2 14h1v1h-1zM7 14h1v1h-1z"/><path fill="#040909" fill-opacity=".55" d="M3 0h1v1h-1zM6 0h1v1h-1zM1 1h1v1h-1zM8 1h1v1h-1zM0 3h1v1h-1zM1 4h1v1h-1zM4 5h1v1h-1zM8 5h1v1h-1zM3 7h1v1h-1zM7 7h1v1h-1zM3 9h1v1h-1zM6 9h1v1h-1zM4 10h2v1h-2zM2 12h1v1h-1zM7 12h1v1h-1zM2 13h1v1h-1zM7 13h1v1h-1zM3 14h1v1h-1zM6 14h1v1h-1z"/><path fill="#040909" d="M4 0h2v1h-2zM2 1h1v1h-1zM7 1h1v1h-1zM1 2h1v1h-1zM8 2h1v1h-1zM4 3h2v1h-2zM8 3h1v1h-1zM2 4h2v1h-2zM5 4h1v1h-1zM8 4h1v1h-1zM7 6h1v1h-1zM3 8h1v1h-1zM6 8h1v1h-1zM4 14h2v1h-2z"/><path fill="#3a8f90" d="M3 1h1v1h-1zM6 1h1v1h-1zM4 2h2v1h-2zM7 2h1v1h-1zM7 3h1v1h-1zM7 4h1v1h-1zM5 5h1v1h-1zM6 6h1v1h-1zM4 7h2v1h-2zM5 8h1v1h-1zM4 9h2v1h-2zM4 11h2v1h-2zM3 12h1v1h-1zM6 12h1v1h-1zM3 13h4v1h-4z"/><path fill="#b8e0e0" d="M4 1h2v1h-2zM2 2h1v1h-1zM6 3h1v1h-1zM6 4h1v1h-1zM5 6h1v1h-1zM4 8h1v1h-1zM4 12h1v1h-1z"/><path fill="#86c6c6" d="M3 2h1v1h-1zM6 2h1v1h-1zM2 3h1v1h-1zM6 5h1v1h-1zM5 12h1v1h-1z"/><path fill="#0b3f40" d="M1 3h1v1h-1zM3 3h1v1h-1zM7 5h1v1h-1zM4 6h1v1h-1zM6 7h1v1h-1zM3 11h1v1h-1zM6 11h1v1h-1z"/><path fill="#cfdcdc" d="M4 4h1v1h-1z"/></g></svg><svg class="px" style="left:18px;top:244px" width="20" height="30" viewBox="0 0 10 15"><g filter="url(#fPx)"><path fill="#040909" fill-opacity=".22" d="M2 0h1v1h-1zM7 0h1v1h-1zM9 3h1v1h-1zM9 4h1v1h-1zM3 6h1v1h-1zM8 6h1v1h-1zM7 8h1v1h-1zM3 10h1v1h-1zM6 10h1v1h-1zM2 11h1v1h-1zM7 11h1v1h-1zM2 14h1v1h-1zM7 14h1v1h-1z"/><path fill="#040909" fill-opacity=".55" d="M3 0h1v1h-1zM6 0h1v1h-1zM1 1h1v1h-1zM8 1h1v1h-1zM0 3h1v1h-1zM1 4h1v1h-1zM4 5h1v1h-1zM8 5h1v1h-1zM3 7h1v1h-1zM7 7h1v1h-1zM3 9h1v1h-1zM6 9h1v1h-1zM4 10h2v1h-2zM2 12h1v1h-1zM7 12h1v1h-1zM2 13h1v1h-1zM7 13h1v1h-1zM3 14h1v1h-1zM6 14h1v1h-1z"/><path fill="#040909" d="M4 0h2v1h-2zM2 1h1v1h-1zM7 1h1v1h-1zM1 2h1v1h-1zM8 2h1v1h-1zM4 3h2v1h-2zM8 3h1v1h-1zM2 4h2v1h-2zM5 4h1v1h-1zM8 4h1v1h-1zM7 6h1v1h-1zM3 8h1v1h-1zM6 8h1v1h-1zM4 14h2v1h-2z"/><path fill="#3a8f90" d="M3 1h1v1h-1zM6 1h1v1h-1zM4 2h2v1h-2zM7 2h1v1h-1zM7 3h1v1h-1zM7 4h1v1h-1zM5 5h1v1h-1zM6 6h1v1h-1zM4 7h2v1h-2zM5 8h1v1h-1zM4 9h2v1h-2zM4 11h2v1h-2zM3 12h1v1h-1zM6 12h1v1h-1zM3 13h4v1h-4z"/><path fill="#b8e0e0" d="M4 1h2v1h-2zM2 2h1v1h-1zM6 3h1v1h-1zM6 4h1v1h-1zM5 6h1v1h-1zM4 8h1v1h-1zM4 12h1v1h-1z"/><path fill="#86c6c6" d="M3 2h1v1h-1zM6 2h1v1h-1zM2 3h1v1h-1zM6 5h1v1h-1zM5 12h1v1h-1z"/><path fill="#0b3f40" d="M1 3h1v1h-1zM3 3h1v1h-1zM7 5h1v1h-1zM4 6h1v1h-1zM6 7h1v1h-1zM3 11h1v1h-1zM6 11h1v1h-1z"/><path fill="#cfdcdc" d="M4 4h1v1h-1z"/></g></svg><svg class="px" style="left:66px;top:244px" width="20" height="30" viewBox="0 0 10 15"><g filter="url(#fPx)"><path fill="#040909" fill-opacity=".22" d="M2 0h1v1h-1zM7 0h1v1h-1zM9 3h1v1h-1zM9 4h1v1h-1zM3 6h1v1h-1zM8 6h1v1h-1zM7 8h1v1h-1zM3 10h1v1h-1zM6 10h1v1h-1zM2 11h1v1h-1zM7 11h1v1h-1zM2 14h1v1h-1zM7 14h1v1h-1z"/><path fill="#040909" fill-opacity=".55" d="M3 0h1v1h-1zM6 0h1v1h-1zM1 1h1v1h-1zM8 1h1v1h-1zM0 3h1v1h-1zM1 4h1v1h-1zM4 5h1v1h-1zM8 5h1v1h-1zM3 7h1v1h-1zM7 7h1v1h-1zM3 9h1v1h-1zM6 9h1v1h-1zM4 10h2v1h-2zM2 12h1v1h-1zM7 12h1v1h-1zM2 13h1v1h-1zM7 13h1v1h-1zM3 14h1v1h-1zM6 14h1v1h-1z"/><path fill="#040909" d="M4 0h2v1h-2zM2 1h1v1h-1zM7 1h1v1h-1zM1 2h1v1h-1zM8 2h1v1h-1zM4 3h2v1h-2zM8 3h1v1h-1zM2 4h2v1h-2zM5 4h1v1h-1zM8 4h1v1h-1zM7 6h1v1h-1zM3 8h1v1h-1zM6 8h1v1h-1zM4 14h2v1h-2z"/><path fill="#3a8f90" d="M3 1h1v1h-1zM6 1h1v1h-1zM4 2h2v1h-2zM7 2h1v1h-1zM7 3h1v1h-1zM7 4h1v1h-1zM5 5h1v1h-1zM6 6h1v1h-1zM4 7h2v1h-2zM5 8h1v1h-1zM4 9h2v1h-2zM4 11h2v1h-2zM3 12h1v1h-1zM6 12h1v1h-1zM3 13h4v1h-4z"/><path fill="#b8e0e0" d="M4 1h2v1h-2zM2 2h1v1h-1zM6 3h1v1h-1zM6 4h1v1h-1zM5 6h1v1h-1zM4 8h1v1h-1zM4 12h1v1h-1z"/><path fill="#86c6c6" d="M3 2h1v1h-1zM6 2h1v1h-1zM2 3h1v1h-1zM6 5h1v1h-1zM5 12h1v1h-1z"/><path fill="#0b3f40" d="M1 3h1v1h-1zM3 3h1v1h-1zM7 5h1v1h-1zM4 6h1v1h-1zM6 7h1v1h-1zM3 11h1v1h-1zM6 11h1v1h-1z"/><path fill="#cfdcdc" d="M4 4h1v1h-1z"/></g></svg><div class="row" style="left:108px;top:80px;line-height:41px;letter-spacing:0.2px">MainWindow</div>
    <div class="row" style="left:108px;top:120px;line-height:42px;">按钮</div>
    <div class="row" style="left:108px;top:160px;line-height:42px;">按钮2</div>
    <div class="row" style="left:108px;top:200px;line-height:41px;letter-spacing:0.3px">English text</div>
    <div class="row" style="left:108px;top:240px;line-height:41px;letter-spacing:0.3px">Chinese text</div>
  </div>
  <div class="vsep" style="left:1321px;top:144px;height:876px;width:2px"></div><div style="left:1323px;top:144px;width:1px;height:876px;background:#fbfbfb"></div>

  <!-- RIGHT DOCK : 源文和窗体 -->
  <div id="rdock" style="left:1324px;top:144px;width:1700px;height:878px;background:#bfbfbf;">
    <div class="dt" style="left:0;top:0;width:1700px"><div class="ttl" style="left:68px">源文和窗体</div><svg class="cb" style="left:4px;top:6px" width="28" height="28" viewBox="0 0 28 28"><circle cx="14" cy="14" r="14" fill="#5c5c5c"/><path d="M8.6 8.6L19.4 19.4M19.4 8.6L8.6 19.4" stroke="#e9e9e9" stroke-width="3.8" stroke-linecap="round"/></svg><svg class="cb" style="left:40px;top:6px" width="28" height="28" viewBox="0 0 28 28"><circle cx="14" cy="14" r="14" fill="#5c5c5c"/><rect x="11.3" y="9.3" width="9.8" height="7.7" fill="none" stroke="#e9e9e9" stroke-width="2.3"/><rect x="7.2" y="13.5" width="9.8" height="7.8" fill="#5c5c5c" stroke="#e9e9e9" stroke-width="2.3"/></svg></div>
    <div style="left:0;top:41px;width:1700px;height:3px;background:linear-gradient(#c0c0c0 0,#c0c0c0 2px,#d6d6d6 2px,#d6d6d6 3px)"></div>
    <!-- preview window -->
    <div style="left:1px;top:45px;width:180px;height:266px;background:#ececec;border-radius:11px 11px 0 0;">
      <div class="tl" style="left:17px;top:15px;width:24px;height:24px;background:#e0e0e0;border-color:#cdcdcd"></div>
      <div class="tl" style="left:61px;top:15px;width:24px;height:24px;background:#e0e0e0;border-color:#cdcdcd"></div>
      <div class="tl" style="left:105px;top:15px;width:24px;height:24px;background:#e0e0e0;border-color:#cdcdcd"></div>
      <div style="left:1px;top:55px;width:178px;height:156px;background:#bfbfbf"></div>
      <div class="btn" style="left:27px;top:81px;width:126px;height:40px;background:#fff;border-radius:10px;box-shadow:0 1px 2px rgba(0,0,0,.25);font-size:26px;line-height:39px;text-align:center;letter-spacing:0.8px">button</div>
      <div class="btn" style="left:27px;top:149px;width:126px;height:40px;background:#fff;border-radius:10px;box-shadow:0 1px 2px rgba(0,0,0,.25);font-size:26px;line-height:39px;text-align:center;letter-spacing:0.7px">button2</div>
      <div style="left:1px;top:211px;width:178px;height:1px;background:#8e8e8e"></div>
      <div style="left:0;top:212px;width:180px;height:54px;background:linear-gradient(#f7f7f7,#e3e3e3)"></div>
      <svg style="left:156px;top:242px" width="24" height="24" viewBox="0 0 24 24"><path d="M2 24L24 2M10 24L24 10M17 24L24 17" stroke="#7c7c7c" stroke-width="2" fill="none"/></svg>
    </div>
  </div>
  <div class="hsep" style="left:763px;top:1020px;width:2261px"></div>

  <!-- EDITOR -->
  <div class="ed" style="left:764px;top:1024px;width:2259px;height:456px;background:#fff;border:1px solid #b4b4b4;border-top-color:#8e8e8e;border-bottom:none;overflow:hidden">
    <b class="h" style="top:17px">源文</b>
    <div class="row" style="left:23px;top:71px;line-height:32px;letter-spacing:0.2px">MainWindow</div>
    <div style="left:5px;top:125px;width:2248px;height:256px;background:#edf3fe"></div>
    <b class="h" style="top:136px">翻译为 American English (United States)</b>
    <div class="inp" style="left:15px;top:183px;width:2227px;height:51px"></div>
    <b class="h" style="top:256px">American English (United States) 的译文注释</b>
    <div class="inp" style="left:15px;top:303px;width:2227px;height:51px"></div>
    <div style="left:5px;top:385px;width:2248px;height:100px;background:#e9fffe"></div>
    <b class="h" style="top:396px">翻译为 简体中文 (中国)</b>
    <div class="inp" style="left:15px;top:442px;width:2227px;height:51px"></div>
  </div>
  <div class="hsep" style="left:763px;top:1480px;width:2261px;height:3px"></div><div style="left:763px;top:1483px;width:2261px;height:1px;background:#fbfbfb"></div>

  <!-- BOTTOM LEFT DOCK : 短语和猜测 -->
  <div id="pdock" style="left:764px;top:1484px;width:1135px;height:191px;background:#fff">
    <div class="dt" style="left:0;top:0;width:1135px"><div class="ttl" style="left:68px">短语和猜测</div><svg class="cb" style="left:4px;top:6px" width="28" height="28" viewBox="0 0 28 28"><circle cx="14" cy="14" r="14" fill="#5c5c5c"/><path d="M8.6 8.6L19.4 19.4M19.4 8.6L8.6 19.4" stroke="#e9e9e9" stroke-width="3.8" stroke-linecap="round"/></svg><svg class="cb" style="left:40px;top:6px" width="28" height="28" viewBox="0 0 28 28"><circle cx="14" cy="14" r="14" fill="#5c5c5c"/><rect x="11.3" y="9.3" width="9.8" height="7.7" fill="none" stroke="#e9e9e9" stroke-width="2.3"/><rect x="7.2" y="13.5" width="9.8" height="7.8" fill="#5c5c5c" stroke="#e9e9e9" stroke-width="2.3"/></svg></div>
    <div class="dtl" style="left:0;top:41px;width:1135px"></div>
    <div style="left:0;top:45px;width:1px;height:147px;background:#b4b4b4"></div>
    <div class="hd" style="left:2px;top:46px;width:1133px">
      <span style="left:8px">源短语</span><b style="left:198px"></b><span style="left:209px">译文</span><b style="left:398px"></b><span style="left:408px">准确度</span><b style="left:1130px"></b>
    </div>
    <div style="left:2px;top:80px;width:1133px;height:110px;background:repeating-linear-gradient(#fff 0,#fff 36px,#f1f3f2 36px,#f1f3f2 72px)"></div>
    <div style="left:0;top:190px;width:1135px;height:1px;background:#b6b6b6"></div>
    </div>
  <div class="vsep" style="left:1899px;top:1483px;height:192px;width:2px"></div>

  <!-- BOTTOM RIGHT DOCK : 警告 -->
  <div id="wdock" style="left:1901px;top:1484px;width:1123px;height:191px;background:#fff">
    <div class="dt" style="left:0;top:0;width:1123px"><div class="ttl" style="left:70px">警告</div><svg class="cb" style="left:5px;top:6px" width="28" height="28" viewBox="0 0 28 28"><circle cx="14" cy="14" r="14" fill="#5c5c5c"/><path d="M8.6 8.6L19.4 19.4M19.4 8.6L8.6 19.4" stroke="#e9e9e9" stroke-width="3.8" stroke-linecap="round"/></svg><svg class="cb" style="left:41px;top:6px" width="28" height="28" viewBox="0 0 28 28"><circle cx="14" cy="14" r="14" fill="#5c5c5c"/><rect x="11.3" y="9.3" width="9.8" height="7.7" fill="none" stroke="#e9e9e9" stroke-width="2.3"/><rect x="7.2" y="13.5" width="9.8" height="7.8" fill="#5c5c5c" stroke="#e9e9e9" stroke-width="2.3"/></svg></div>
    <div class="dtl" style="left:0;top:41px;width:1123px"></div>
    <div style="left:0;top:46px;width:1122px;height:145px;border:1px solid #b4b4b4;border-top:none;border-left-color:#fbfbfb;background:#fff"></div>
  </div>

  <!-- STATUS BAR -->
  <div style="left:0;top:1675px;width:3024px;height:3px;background:linear-gradient(#fafafa 0,#fafafa 1px,#858585 1px,#858585 2px,#fdfdfd 2px,#fdfdfd 3px)"></div>
  <div style="left:0;top:1678px;width:3024px;height:52px;background:linear-gradient(#f7f7f7,#e0e0e0)">
    <div class="row" style="right:10px;top:10px;line-height:34px">1/5</div>
  </div>

  <!-- red highlight -->
  <div style="left:-0.5px;top:137px;width:761.5px;height:215px;border:6.5px solid #e83b24;border-radius:13px;"></div>
</div>
</body>
</html>
